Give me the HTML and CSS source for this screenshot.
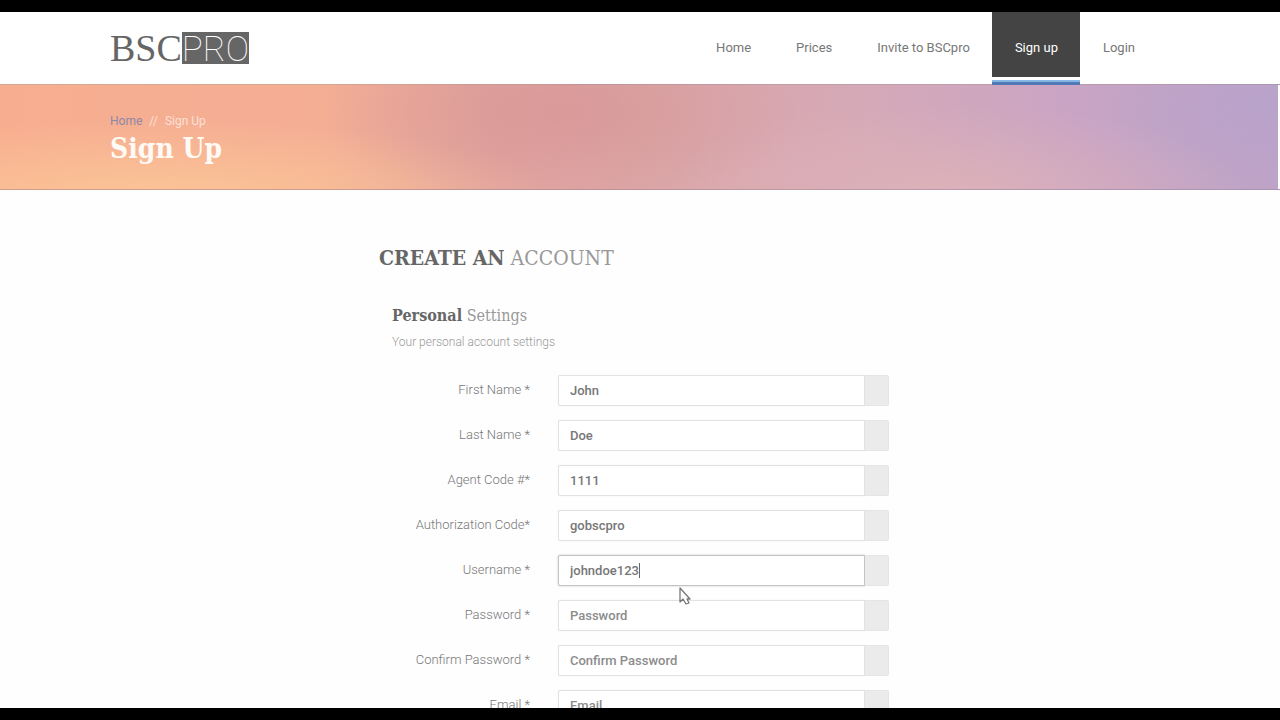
FILE: index.html
```html
<!DOCTYPE html>
<html lang="en">
<head>
<meta charset="utf-8">
<title>BSCpro - Sign Up</title>
<link rel="stylesheet" href="styles.css">
</head>
<body>
<div class="page">
  <header class="header">
    <div class="container header-row">
      <a class="logo" href="#"><span class="logo-serif">BSC</span><span class="logo-box">PRO</span></a>
      <nav class="nav">
        <a class="nav-link" href="#">Home</a>
        <a class="nav-link" href="#">Prices</a>
        <a class="nav-link" href="#">Invite to BSCpro</a>
        <a class="nav-link active" href="#">Sign up</a>
        <a class="nav-link" href="#">Login</a>
      </nav>
    </div>
  </header>
  <section class="banner">
    <div class="container">
      <div class="crumbs"><a href="#">Home</a><span>//</span><span>Sign Up</span></div>
      <h1 class="title">Sign Up</h1>
    </div>
  </section>
  <main class="account">
    <h2 class="heading"><b>CREATE AN</b> ACCOUNT</h2>
    <form class="form">
      <h3 class="subheading"><b>Personal</b> Settings</h3>
      <p class="hint">Your personal account settings</p>
      <div class="fields">
        <div class="row"><label for="first">First Name *</label><div class="group"><input id="first" type="text" value="John"><span class="addon"></span></div></div>
        <div class="row"><label for="last">Last Name *</label><div class="group"><input id="last" type="text" value="Doe"><span class="addon"></span></div></div>
        <div class="row"><label for="agent">Agent Code #*</label><div class="group"><input id="agent" type="text" value="1111"><span class="addon"></span></div></div>
        <div class="row"><label for="auth">Authorization Code*</label><div class="group"><input id="auth" type="text" value="gobscpro"><span class="addon"></span></div></div>
        <div class="row"><label for="user">Username *</label><div class="group"><input class="current" id="user" type="text" value="johndoe123"><span class="addon"></span><span class="caret"></span>
          <svg class="pointer" width="12" height="19" viewBox="0 0 12 19" aria-hidden="true"><path d="M1 1v14l3-3 3 5 3-1-2-4h3z" fill="#fff" stroke="#777" stroke-width="1.3" stroke-linejoin="round"/></svg></div></div>
        <div class="row"><label for="pass">Password *</label><div class="group"><input id="pass" type="password" placeholder="Password"><span class="addon"></span></div></div>
        <div class="row"><label for="confirm">Confirm Password *</label><div class="group"><input id="confirm" type="password" placeholder="Confirm Password"><span class="addon"></span></div></div>
        <div class="row"><label for="email">Email *</label><div class="group"><input id="email" type="email" placeholder="Email"><span class="addon"></span></div></div>
      </div>
    </form>
  </main>
</div>
</body>
</html>
```
FILE: styles.css
```css
*, *::after { box-sizing: border-box; }
body {
  margin: 0;
  background: #000;
  color: #777;
  font: 13px/20px Roboto, sans-serif;
}
.page {
  height: 100vh;
  overflow: hidden;
  border: solid #000;
  border-width: 12px 0;
  background: #fefefe;
}
.container {
  max-width: 1060px;
  margin: 0 auto;
}
.header { background: #fff; }
.header-row {
  display: flex;
  justify-content: space-between;
  height: 72px;
}
.logo {
  display: flex;
  align-items: center;
  color: #666;
  text-decoration: none;
}
.logo-serif { font: 38px/32px "Liberation Serif", serif; }
.logo-box {
  height: 32px;
  background: #666;
  color: #fff;
  font: 100 35px/35px Roboto, sans-serif;
}
.nav {
  display: flex;
  padding-right: 13px;
}
.nav-link {
  height: 72px;
  padding: 0 22px 0 23px;
  color: #777;
  line-height: 71px;
  text-decoration: none;
}
.nav-link.active {
  position: relative;
  height: 65px;
  background: #444;
  color: #fff;
}
.nav-link.active::after {
  content: "";
  position: absolute;
  left: 0;
  right: 0;
  top: 68px;
  height: 5px;
  border-top: 2px solid #86b6e4;
  background: #5079b5;
}
.banner {
  height: 106px;
  padding-top: 28px;
  border: solid rgba(130, 120, 130, .3);
  border-width: 1px 0;
  box-shadow: inset -2px 0 #fefefe;
  background:
    radial-gradient(ellipse 240px 100px at 44% 25%, rgba(213, 145, 145, .6), transparent),
    radial-gradient(ellipse 420px 80px at 12% 110%, rgba(252, 200, 152, .9), transparent),
    radial-gradient(ellipse 300px 90px at 74% 105%, rgba(224, 180, 184, .8), transparent),
    radial-gradient(ellipse 180px 120px at 98% 20%, rgba(182, 162, 204, .7), transparent),
    linear-gradient(90deg, #f7ae90 0%, #f4ae94 25%, #e2a49f 38%, #dba7a9 52%, #d5a9b8 68%, #c9a4c4 84%, #c0a4c6 100%);
}
.crumbs {
  display: flex;
  gap: 7px;
  color: #fbe0d5;
  font-size: 12px;
  line-height: 16px;
}
.crumbs a {
  color: #8e87a8;
  text-decoration: none;
}
.title {
  margin: 0;
  color: #fffaf5;
  font: bold 28px/40px "DejaVu Serif Condensed", "DejaVu Serif", serif;
}
.account {
  max-width: 522px;
  margin: 0 auto;
  padding-top: 52px;
}
.heading, .subheading {
  margin: 0;
  color: #999;
  font-family: "DejaVu Serif Condensed", "DejaVu Serif", serif;
  font-weight: 400;
}
.heading {
  font-size: 21px;
  line-height: 32px;
}
.subheading {
  font-size: 16px;
  line-height: 24px;
}
.heading b, .subheading b { color: #666; }
.form { padding: 30px 12px 0 13px; }
.hint {
  margin: 4px 0 0;
  color: #999;
  font-size: 12px;
  font-weight: 300;
}
.fields {
  display: grid;
  gap: 14px;
  padding-top: 23px;
}
.row {
  display: grid;
  grid-template-columns: 138px 1fr;
  column-gap: 28px;
}
.row label {
  color: #777;
  font-weight: 300;
  line-height: 30px;
  text-align: right;
}
.group {
  position: relative;
  display: flex;
  height: 31px;
}
.group input {
  flex: 1;
  min-width: 0;
  padding: 0 11px;
  border: 1px solid #e2e2e2;
  border-radius: 2px 0 0 2px;
  outline: 0;
  background: #fff;
  box-shadow: 0 0 1px #ddd;
  color: #777;
  font: 500 13px/20px Roboto, sans-serif;
}
.group input::placeholder {
  color: #8c8c8c;
  opacity: 1;
}
.group .current {
  border-color: #c4c4c4;
  box-shadow: 0 0 2px #bbb;
}
.addon {
  width: 24px;
  border: 1px solid #e5e5e5;
  border-left: 0;
  border-radius: 0 2px 2px 0;
  background: #ebebeb;
}
.caret {
  position: absolute;
  left: 81px;
  top: 8px;
  width: 1px;
  height: 15px;
  background: #666;
}
.pointer {
  position: absolute;
  left: 121px;
  top: 32px;
  z-index: 1;
}
```
